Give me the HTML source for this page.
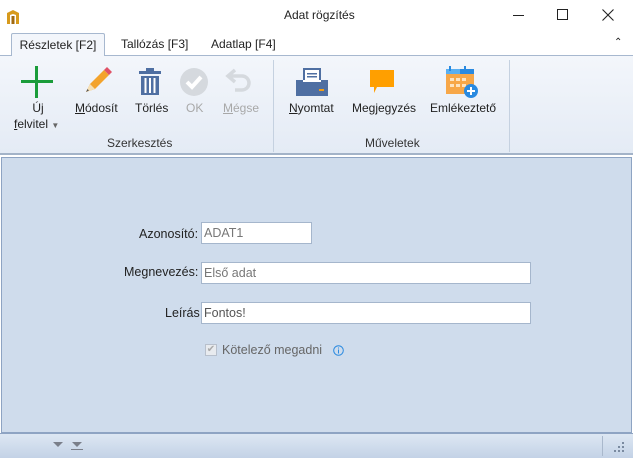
<!DOCTYPE html>
<html><head><meta charset="utf-8"><style>
*{margin:0;padding:0;box-sizing:border-box}
body{width:633px;height:458px;overflow:hidden;font-family:"Segoe UI","Liberation Sans",sans-serif;font-size:12px;color:#222;background:#fff;position:relative}
.abs{position:absolute}
.title{top:0;left:0;width:633px;height:32px;background:#fff}
.tabs{top:32px;left:0;width:633px;height:24px;background:#fff;border-bottom:1px solid #a7b8cf}
.tab{top:33px;height:24px;line-height:22px;font-size:12px}
.ribbon{top:56px;left:0;width:633px;height:99px;background:linear-gradient(#f3f6fb,#e4ebf5);border-bottom:2px solid #a3b3c8}
.btn{text-align:center;font-size:12px;color:#222}
.gray{color:#a8a8a8}
.lbl{font-size:12px;color:#333}
.content{top:157px;left:1px;width:631px;height:276px;background:#cfdcec;border:1px solid #8ea4c3}
.input{background:#fff;border:1px solid #a5b6cc;height:22px;line-height:20px;padding-left:2px;color:#777;font-size:12.5px}
.status{top:433px;left:0;width:633px;height:25px;background:linear-gradient(#dde7f3,#c3d2e6);border-top:1px solid #8ea4c3}
u{text-decoration:underline}
</style></head><body>
<div class="abs title"></div>
<svg class="abs" style="left:6px;top:9px" width="14" height="16" viewBox="0 0 14 16"><path d="M1 4 L7 1 L13 4 L13 15 L10 15 L10 6 L7 5 L4 6 L4 15 L1 15Z" fill="#d79a1c"/><rect x="5.5" y="7" width="3" height="8" fill="#a06a10"/></svg>
<div class="abs" style="left:284px;top:8px;font-size:12px">Adat rögzítés</div>
<div class="abs" style="left:513px;top:15px;width:11px;height:1px;background:#222"></div>
<div class="abs" style="left:557px;top:9px;width:11px;height:11px;border:1px solid #222"></div>
<svg class="abs" style="left:602px;top:9px" width="12" height="12"><path d="M0.5 0.5L11.5 11.5M11.5 0.5L0.5 11.5" stroke="#222" stroke-width="1.1"/></svg>
<div class="abs tabs"></div>
<div class="abs tab" style="left:11px;width:94px;border:1px solid #a7b8cf;border-bottom:none;background:#f3f6fb;text-align:center;border-radius:2px 2px 0 0">Részletek [F2]</div>
<div class="abs tab" style="left:121px">Tallózás [F3]</div>
<div class="abs tab" style="left:211px">Adatlap [F4]</div>
<div class="abs" style="left:614px;top:37px;font-size:10px">&#8963;</div>
<div class="abs ribbon"></div>
<div class="abs" style="left:273px;top:60px;width:1px;height:92px;background:#c5d1e0"></div>
<div class="abs" style="left:509px;top:60px;width:1px;height:92px;background:#c5d1e0"></div>
<!-- icons -->
<svg class="abs" style="left:20px;top:65px" width="34" height="34"><rect x="15" y="1" width="3" height="32" fill="#1a9c3a"/><rect x="1" y="15" width="32" height="3" fill="#1a9c3a"/></svg>
<svg class="abs" style="left:82px;top:66px" width="32" height="30"><path d="M4 26 L8 18 L22 4 L27 9 L13 23Z" fill="#f3a32c"/><path d="M22 4 L25 1 L30 6 L27 9Z" fill="#e05266"/><path d="M4 26 L8 18 L13 23Z" fill="#f6e0b5"/><path d="M4 26 L5.5 23 L7 24.5Z" fill="#555"/></svg>
<svg class="abs" style="left:138px;top:67px" width="24" height="30"><rect x="8" y="1" width="8" height="3" fill="#4f6fa2"/><rect x="1" y="4" width="22" height="3" fill="#4f6fa2"/><path d="M3 9H21V28H3Z" fill="#4f6fa2"/><rect x="6.5" y="11" width="2" height="15" fill="#fff"/><rect x="11" y="11" width="2" height="15" fill="#fff"/><rect x="15.5" y="11" width="2" height="15" fill="#fff"/></svg>
<svg class="abs" style="left:180px;top:68px" width="28" height="28"><circle cx="14" cy="14" r="14" fill="#d5d9de"/><path d="M7 14 L12 19 L21 9" stroke="#fff" stroke-width="4" fill="none"/></svg>
<svg class="abs" style="left:225px;top:67px" width="28" height="30"><path d="M10 3 L3 9 L10 15" stroke="#d5d9de" stroke-width="3.5" fill="none"/><path d="M4 9 H17 A7 7 0 0 1 17 23 H10" stroke="#d5d9de" stroke-width="3.5" fill="none"/></svg>
<svg class="abs" style="left:296px;top:68px" width="32" height="28"><rect x="7" y="0" width="18" height="14" fill="#4f6fa2"/><rect x="9" y="2" width="14" height="12" fill="#fff"/><rect x="11" y="5" width="10" height="1.5" fill="#4f6fa2"/><rect x="11" y="8" width="10" height="1.5" fill="#4f6fa2"/><rect x="0" y="12" width="32" height="16" fill="#4f6fa2"/><rect x="7" y="12" width="18" height="2" fill="#fff"/><rect x="23" y="21" width="5" height="2" fill="#f39c12"/></svg>
<svg class="abs" style="left:370px;top:70px" width="26" height="24"><path d="M0 0H24V17H7L4 23V17H0Z" fill="#ff9f00"/></svg>
<svg class="abs" style="left:446px;top:66px" width="32" height="32"><rect x="0" y="3" width="28" height="5" fill="#5aaff0"/><rect x="14" y="3" width="14" height="5" fill="#2a8ae0"/><rect x="0" y="8" width="28" height="20" fill="#f7a748"/><rect x="3" y="0" width="2" height="5" fill="#2a8ae0"/><rect x="18" y="0" width="2" height="5" fill="#2a8ae0"/><g fill="#fde3c0"><rect x="4" y="12" width="4" height="3"/><rect x="10" y="12" width="4" height="3"/><rect x="16" y="12" width="4" height="3"/><rect x="4" y="18" width="4" height="3"/><rect x="10" y="18" width="4" height="3"/><rect x="16" y="18" width="4" height="3"/></g><circle cx="25" cy="25" r="7" fill="#2a8ae0"/><path d="M25 21V29M21 25H29" stroke="#fff" stroke-width="2"/></svg>
<!-- labels -->
<div class="abs btn" style="left:26px;top:101px;width:24px">Új</div>
<div class="abs btn" style="left:14px;top:117px"><u>f</u>elvitel <span style="font-size:8px;color:#666">▼</span></div>
<div class="abs btn" style="left:75px;top:101px"><u>M</u>ódosít</div>
<div class="abs btn" style="left:135px;top:101px">Törlés</div>
<div class="abs btn gray" style="left:186px;top:101px">OK</div>
<div class="abs btn gray" style="left:223px;top:101px"><u>M</u>égse</div>
<div class="abs btn" style="left:289px;top:101px"><u>N</u>yomtat</div>
<div class="abs btn" style="left:352px;top:101px">Megjegyzés</div>
<div class="abs btn" style="left:430px;top:101px">Emlékeztető</div>
<div class="abs lbl" style="left:107px;top:136px">Szerkesztés</div>
<div class="abs lbl" style="left:365px;top:136px">Műveletek</div>
<div class="abs content"></div>
<div class="abs" style="left:139px;top:227px;font-size:12.5px">Azonosító:</div>
<div class="abs input" style="left:201px;top:222px;width:111px">ADAT1</div>
<div class="abs" style="left:124px;top:265px;font-size:12.5px">Megnevezés:</div>
<div class="abs input" style="left:201px;top:262px;width:330px">Első adat</div>
<div class="abs" style="left:165px;top:306px;font-size:12.5px">Leírás</div>
<div class="abs input" style="left:201px;top:302px;width:330px;color:#555">Fontos!</div>
<div class="abs" style="left:205px;top:344px;width:12px;height:12px;border:1px solid #b8c0cc;background:#e8ebef;font-size:10px;line-height:10px;color:#aaa;text-align:center">✔</div>
<div class="abs" style="left:222px;top:343px;font-size:12.5px;color:#666">Kötelező megadni</div>
<svg class="abs" style="left:333px;top:345px" width="11" height="11"><circle cx="5.5" cy="5.5" r="4.8" fill="none" stroke="#2a8ae0"/><rect x="5" y="4.5" width="1" height="4" fill="#2a8ae0"/><rect x="5" y="2.5" width="1" height="1" fill="#2a8ae0"/></svg>
<div class="abs status"></div>
<svg class="abs" style="left:8px;top:440px" width="85" height="12"><path d="M45 2H55L50 7Z" fill="#7a7f8a"/><path d="M64 2H74L69 7Z" fill="#7a7f8a"/><rect x="63" y="9" width="12" height="1" fill="#7a7f8a"/></svg>
<div class="abs" style="left:602px;top:436px;width:1px;height:20px;background:#a9b8cc"></div>
<svg class="abs" style="left:614px;top:442px" width="12" height="12" fill="#7a8aa0"><rect x="8" y="0" width="2" height="2"/><rect x="4" y="4" width="2" height="2"/><rect x="8" y="4" width="2" height="2"/><rect x="0" y="8" width="2" height="2"/><rect x="4" y="8" width="2" height="2"/><rect x="8" y="8" width="2" height="2"/></svg>
</body></html>
